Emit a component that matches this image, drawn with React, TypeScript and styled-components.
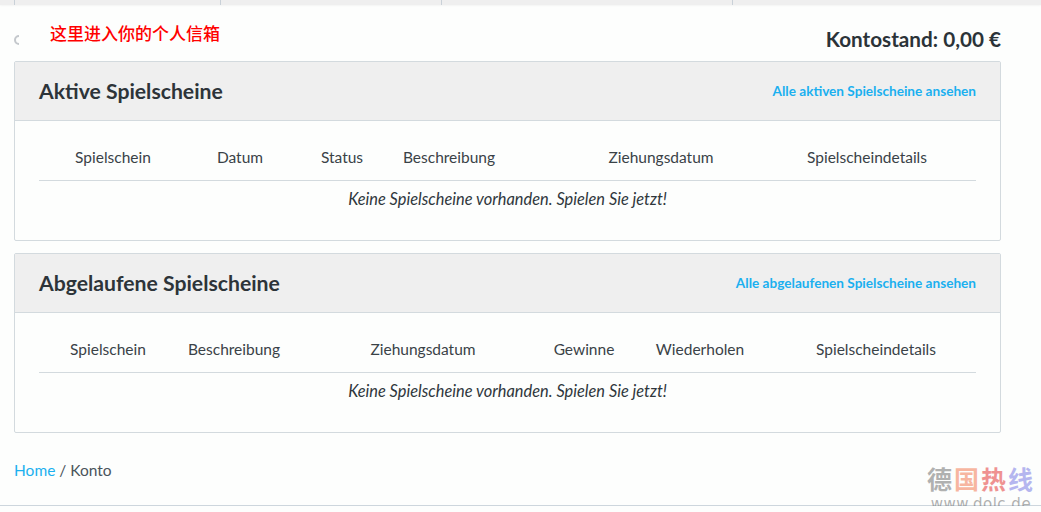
import React from "react";
import styled, { createGlobalStyle } from "styled-components";

const Global = createGlobalStyle`
  html, body {
    margin: 0;
    padding: 0;
    background: #fdfefd;
    font-family: Lato, "Noto Sans", sans-serif;
    color: #363e44;
  }
`;

const TopStrip = styled.div`
  height: 5px;
  background: #efefef;
  display: flex;
  padding-left: 14px;
  box-shadow: 0 1px 2px rgba(0, 0, 0, 0.04);
`;

const StripTab = styled.div<{ $w: number }>`
  width: ${(p) => p.$w}px;
  border-left: 1px solid #c9d1d8;
  flex: none;
`;

const Page = styled.div`
  width: 987px;
  margin-left: 14px;
  padding-top: 16px;
`;

const InfoBar = styled.div`
  display: flex;
  align-items: center;
  height: 30px;
  margin-bottom: 10px;
`;

const Spinner = styled.svg`
  width: 6px;
  height: 10px;
  margin-top: 8px;
  flex: none;
`;

const MailHint = styled.a`
  margin-left: 30px;
  color: #ff0000;
  font-family: "Noto Sans CJK SC", sans-serif;
  font-size: 17px;
  line-height: 20px;
  font-weight: 500;
  text-decoration: none;
  margin-top: -7px;
`;

const Balance = styled.div`
  margin-left: auto;
  font-size: 20.7px;
  font-weight: 700;
  color: #2b3338;
  margin-top: 6px;
`;

const Panel = styled.section`
  border: 1px solid #d3dade;
  border-radius: 2px;
  background: #fdfefd;
  margin-bottom: 12px;
`;

const PanelHead = styled.header`
  height: 58px;
  background: #efefef;
  border-bottom: 1px solid #d3dade;
  display: flex;
  align-items: center;
  justify-content: space-between;
  padding: 0 24px;
`;

const PanelTitle = styled.h2`
  margin: 0;
  font-size: 21.2px;
  font-weight: 700;
  color: #2d3439;
`;

const HeadLink = styled.a`
  color: #1bb0ef;
  font-size: 13.6px;
  font-weight: 700;
  text-decoration: none;
`;

const PanelBody = styled.div`
  padding: 26px 24px 31px;
`;

const HeadRow = styled.div<{ $cols: string }>`
  display: grid;
  grid-template-columns: ${(p) => p.$cols};
  line-height: 20px;
  padding-bottom: 13px;
  border-bottom: 1px solid #d3dade;
  font-size: 15.5px;
  color: #3a4247;
`;

const HeadCell = styled.div`
  display: flex;
  justify-content: center;
  white-space: nowrap;
`;

const EmptyRow = styled.div`
  text-align: center;
  font-style: italic;
  font-size: 16.4px;
  line-height: 20px;
  color: #2f373c;
  padding-top: 8px;
`;

const Crumbs = styled.nav`
  margin-top: 27px;
  font-size: 15.5px;
  line-height: 20px;
  color: #4a545b;
`;

const CrumbLink = styled.a`
  color: #1bb0ef;
  text-decoration: none;
`;

const BottomLine = styled.div`
  margin-top: 25px;
  border-top: 1px solid #cdd6dd;
  position: relative;
`;

const Watermark = styled.div`
  position: absolute;
  right: 6px;
  bottom: -6px;
  display: flex;
  flex-direction: column;
  align-items: center;
  gap: 7px;
  opacity: 0.45;
`;

const WmTitle = styled.div`
  font-family: "Noto Sans CJK SC", sans-serif;
  font-weight: 700;
  font-size: 25px;
  line-height: 24px;
  letter-spacing: 2px;
`;

const WmChar = styled.span<{ $c: string }>`
  color: ${(p) => p.$c};
`;

const WmUrl = styled.div`
  font-family: "DejaVu Sans", sans-serif;
  font-size: 15px;
  line-height: 15px;
  letter-spacing: 0.5px;
  color: #555;
`;

type Table = {
  title: string;
  link: string;
  cols: string;
  heads: string[];
};

const tables: Table[] = [
  {
    title: "Aktive Spielscheine",
    link: "Alle aktiven Spielscheine ansehen",
    cols: "148px 106px 98px 116px 308px 104px 1fr",
    heads: ["Spielschein", "Datum", "Status", "Beschreibung", "Ziehungsdatum", "Spielscheindetails"],
  },
  {
    title: "Abgelaufene Spielscheine",
    link: "Alle abgelaufenen Spielscheine ansehen",
    cols: "138px 114px 264px 58px 174px 178px 1fr",
    heads: ["Spielschein", "Beschreibung", "Ziehungsdatum", "Gewinne", "Wiederholen", "Spielscheindetails"],
  },
];

export default function App() {
  return (
    <>
      <Global />
      <TopStrip>
        <StripTab $w={205} />
        <StripTab $w={220} />
        <StripTab $w={290} />
        <StripTab $w={268} />
      </TopStrip>
      <Page>
        <InfoBar>
          <Spinner viewBox="0 0 6 10">
            <path d="M5 1 A4 4 0 0 0 5 9" fill="none" stroke="#c4c8cc" strokeWidth="2" />
          </Spinner>
          <MailHint href="#">这里进入你的个人信箱</MailHint>
          <Balance>Kontostand: 0,00 €</Balance>
        </InfoBar>
        {tables.map((t) => (
          <Panel key={t.title}>
            <PanelHead>
              <PanelTitle>{t.title}</PanelTitle>
              <HeadLink href="#">{t.link}</HeadLink>
            </PanelHead>
            <PanelBody>
              <HeadRow $cols={t.cols}>
                {t.heads.map((h) => (
                  <HeadCell key={h}>{h}</HeadCell>
                ))}
              </HeadRow>
              <EmptyRow>Keine Spielscheine vorhanden. Spielen Sie jetzt!</EmptyRow>
            </PanelBody>
          </Panel>
        ))}
        <Crumbs>
          <CrumbLink href="#">Home</CrumbLink> / Konto
        </Crumbs>
      </Page>
      <BottomLine>
        <Watermark>
          <WmTitle>
            <WmChar $c="#555">德</WmChar>
            <WmChar $c="#f06030">国</WmChar>
            <WmChar $c="#e01010">热</WmChar>
            <WmChar $c="#6060e0">线</WmChar>
          </WmTitle>
          <WmUrl>www.dolc.de</WmUrl>
        </Watermark>
      </BottomLine>
    </>
  );
}
